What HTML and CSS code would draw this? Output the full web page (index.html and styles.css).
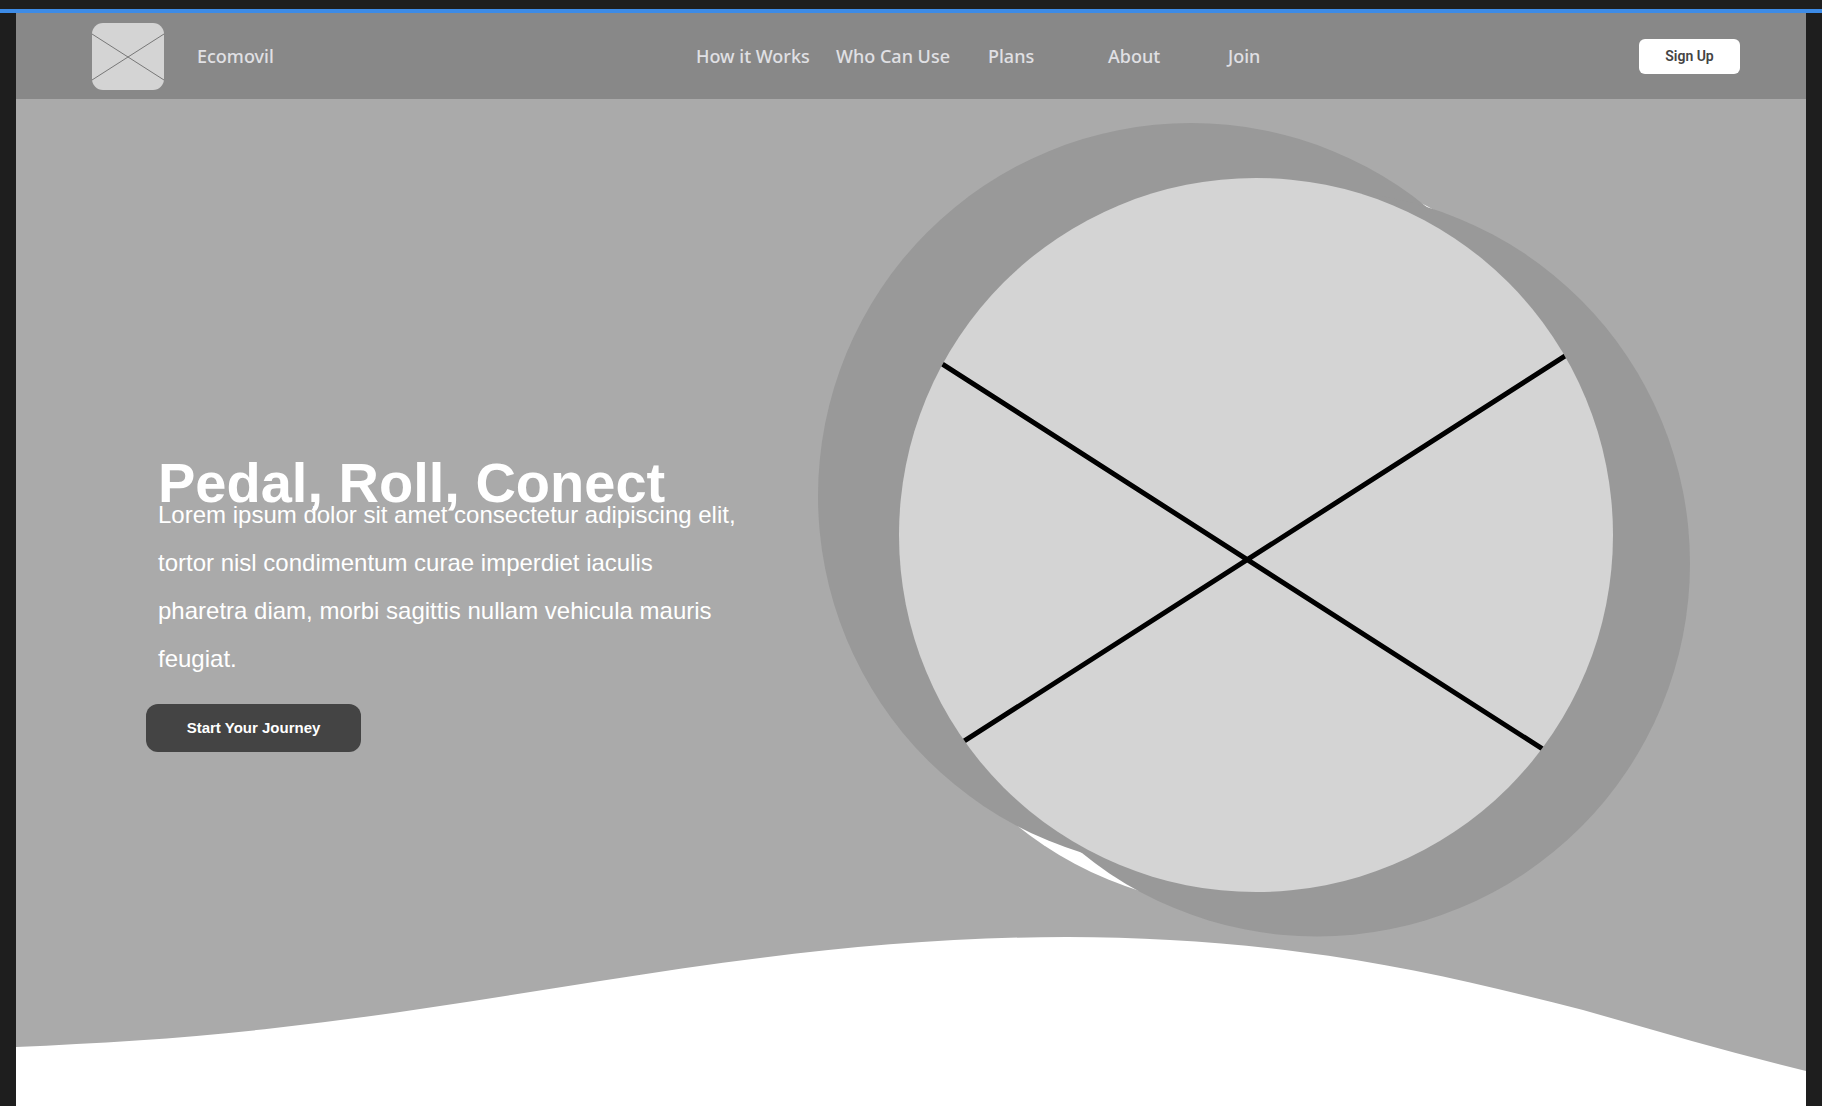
FILE: index.html
```html
<!DOCTYPE html>
<html lang="en">
<head>
<meta charset="utf-8">
<meta name="viewport" content="width=device-width, initial-scale=1">
<title>Ecomovil</title>
<link rel="stylesheet" href="styles.css">
</head>
<body>
<div class="accent"></div>
<div class="page">
  <header class="topbar">
    <div class="brand">
      <svg class="logo" viewBox="0 0 72 67" aria-hidden="true">
        <rect class="photo" width="72" height="67" rx="11"/>
        <path class="logo-cross" d="M0 11L72 57M0 57L72 11"/>
      </svg>
      <span>Ecomovil</span>
    </div>
    <nav class="menu" aria-label="Main">
      <a href="#how">How it Works</a>
      <a href="#who">Who Can Use</a>
      <a href="#plans">Plans</a>
      <a href="#about">About</a>
      <a href="#join">Join</a>
    </nav>
    <button class="signup" type="button">Sign Up</button>
  </header>
  <main>
    <section class="hero">
      <div class="intro">
        <h1>Pedal, Roll, Conect</h1>
        <p>Lorem ipsum dolor sit amet consectetur adipiscing elit, tortor nisl condimentum curae imperdiet iaculis pharetra diam, morbi sagittis nullam vehicula mauris feugiat.</p>
        <button class="start" type="button">Start Your Journey</button>
      </div>
      <svg class="art" viewBox="818 123 872 814" aria-hidden="true">
        <defs><clipPath id="disc"><circle cx="1256" cy="535" r="357"/></clipPath></defs>
        <circle class="white" cx="1251" cy="535" r="373"/>
        <circle class="shade" cx="1191" cy="496" r="373"/>
        <circle class="shade" cx="1317" cy="563.5" r="373"/>
        <circle class="photo" cx="1256" cy="535" r="357"/>
        <path class="cross" clip-path="url(#disc)" d="M912 344.600L1573 768.500M934 760.400L1596 336.200"/>
      </svg>
    </section>
    <svg class="wave" viewBox="16 937 1790 169" aria-hidden="true">
      <path class="white" d="M16 1047C103 1043 190 1038 275 1028C384 1016 492 998 600 981C755 956 911 937 1067 937C1146 937 1223 942 1300 952C1396 964 1490 986 1583 1010C1657 1031 1731 1053 1806 1071V1107H16Z"/>
    </svg>
  </main>
</div>
</body>
</html>
```
FILE: styles.css
```css
* { box-sizing: border-box; }

body {
  margin: 0;
  padding-top: 9px;
  background: #1e1e1e;
  font-family: "Liberation Sans", Arial, sans-serif;
}

.accent { height: 4px; background: #3d8be6; }

.page { margin: 0 16px; background: #fff; }

.topbar {
  display: grid;
  grid-template-columns: 604fr 943fr auto;
  align-items: center;
  height: 86px;
  padding: 0 66px 0 76px;
  background: #888;
  color: #e0e0e4;
  font: 500 18px/24px "Noto Sans", sans-serif;
}

.brand { display: flex; align-items: center; gap: 33px; }
.logo { width: 72px; height: 67px; }
.logo-cross { stroke: #777; stroke-width: 1; }

.menu { display: grid; grid-template-columns: 140px 152px 120px 120px auto; }
.menu a { color: inherit; text-decoration: none; }

button { border: 0; cursor: pointer; }

.signup {
  width: 101px;
  height: 35px;
  border-radius: 6px;
  background: #fff;
  color: #444;
  font: 600 14px/20px Roboto, sans-serif;
}

.hero {
  display: grid;
  grid-template-columns: minmax(0, 672fr) minmax(0, 872fr);
  align-items: center;
  padding: 24px 116px 0 130px;
  background: #aaa;
}

.intro { padding-top: 146px; color: #fff; }

h1 {
  margin: 0 0 -20px;
  padding-left: 12px;
  font-size: 56px;
  line-height: 56px;
}

p {
  max-width: 596px;
  margin: 0;
  padding-left: 12px;
  font-size: 24px;
  line-height: 48px;
}

.start {
  width: 215px;
  height: 48px;
  margin-top: 21px;
  border-radius: 12px;
  background: #444;
  color: #fff;
  font: 700 15px/24px "Liberation Sans", Arial, sans-serif;
}

.art, .wave { display: block; width: 100%; }
.wave { background: #aaa; }

.white { fill: #fff; }
.shade { fill: #999; }
.photo { fill: #d4d4d4; }
.cross { stroke: #000; stroke-width: 5; }
```
